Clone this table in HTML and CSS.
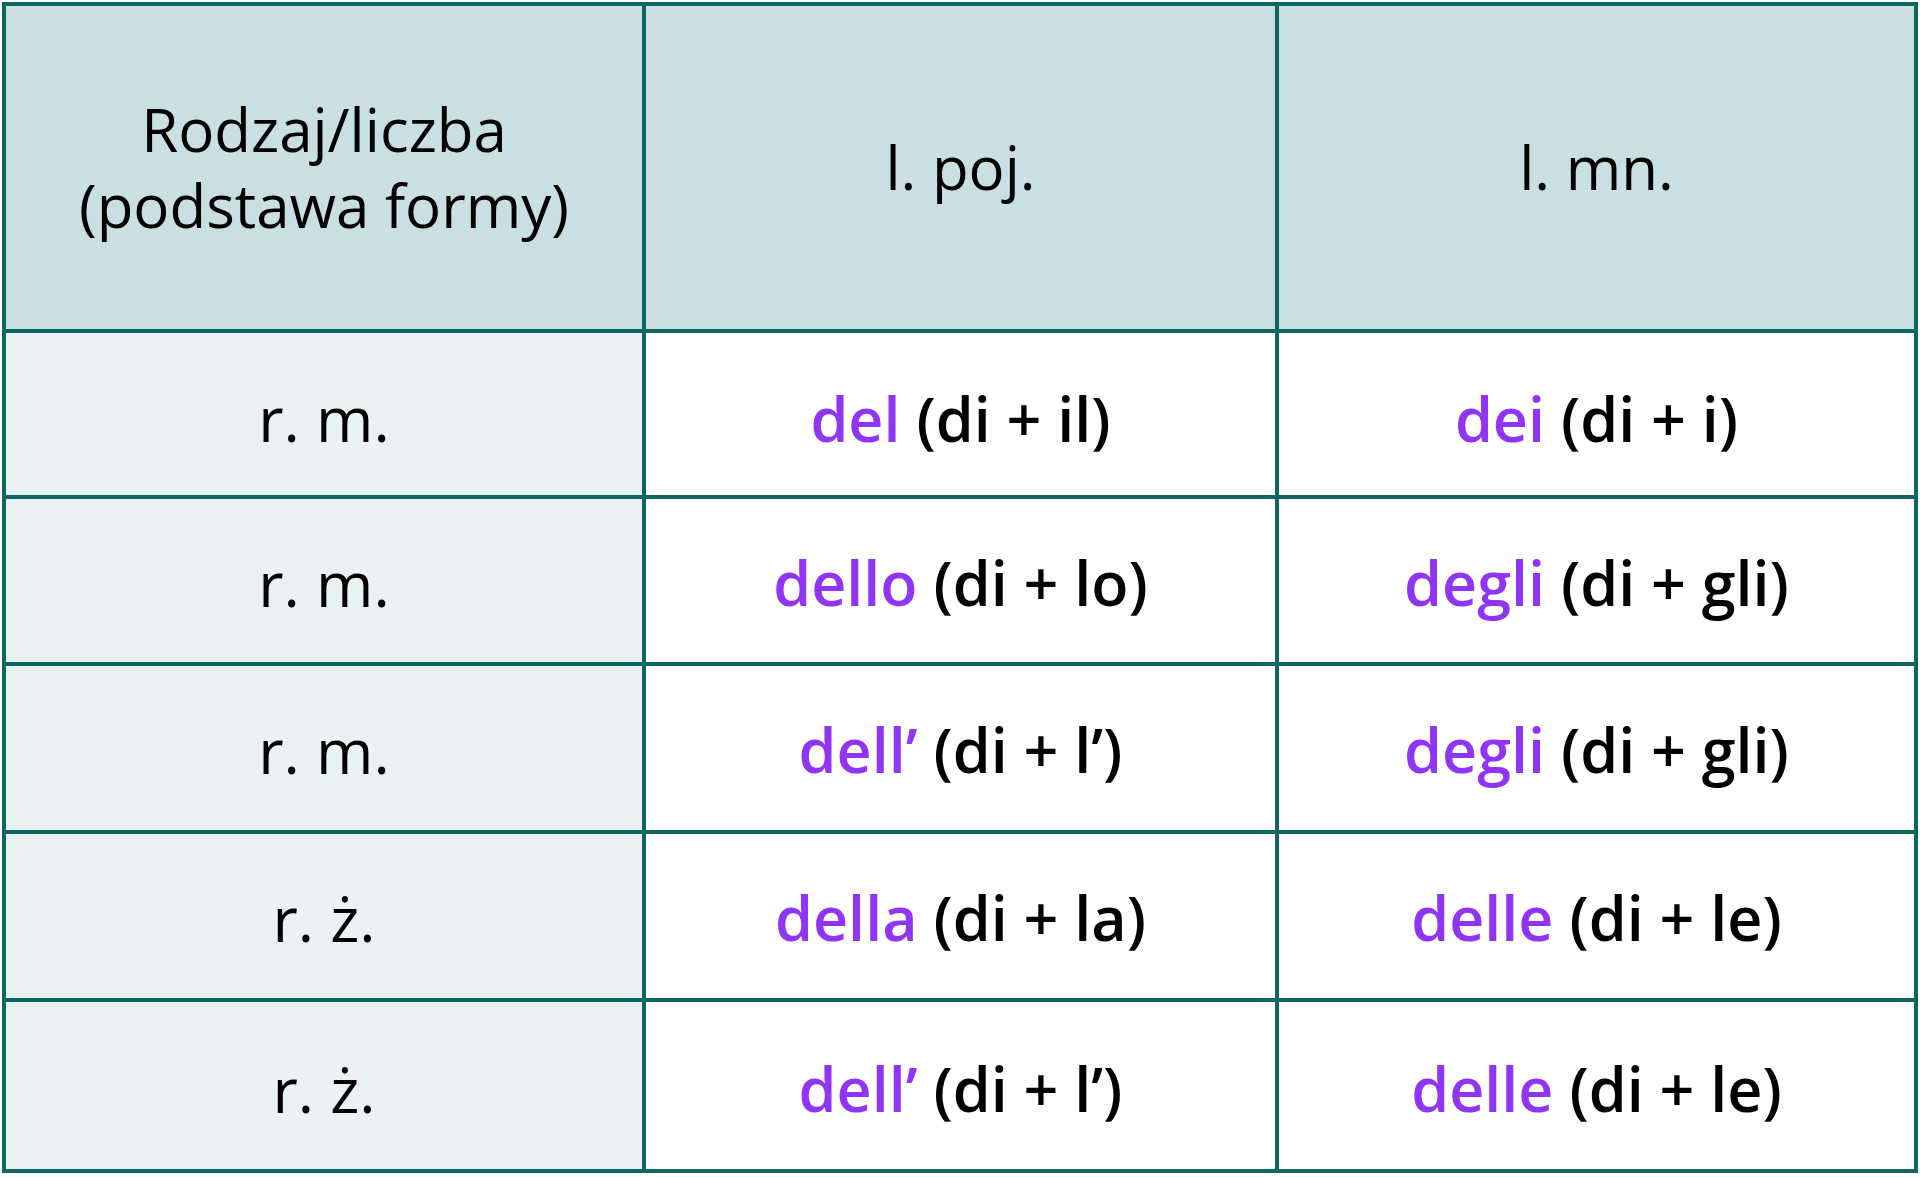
FILE: index.html
```html
<!DOCTYPE html>
<html lang="pl">
<head>
<meta charset="utf-8">
<title>Rodzajnik ściągnięty di</title>
<link rel="stylesheet" href="styles.css">
</head>
<body>
<div class="table">
  <div class="cell head"><span>Rodzaj/liczba<br>(podstawa formy)</span></div>
  <div class="cell head"><span>l. poj.</span></div>
  <div class="cell head"><span>l. mn.</span></div>

  <div class="cell label row-1"><span>r. m.</span></div>
  <div class="cell form row-1"><span><span class="art">del</span> (di + il)</span></div>
  <div class="cell form row-1"><span><span class="art">dei</span> (di + i)</span></div>

  <div class="cell label row-2"><span>r. m.</span></div>
  <div class="cell form row-2"><span><span class="art">dello</span> (di + lo)</span></div>
  <div class="cell form row-2"><span><span class="art">degli</span> (di + gli)</span></div>

  <div class="cell label row-3"><span>r. m.</span></div>
  <div class="cell form row-3"><span><span class="art">dell’</span> (di + l’)</span></div>
  <div class="cell form row-3"><span><span class="art">degli</span> (di + gli)</span></div>

  <div class="cell label row-4"><span>r. ż.</span></div>
  <div class="cell form row-4"><span><span class="art">della</span> (di + la)</span></div>
  <div class="cell form row-4"><span><span class="art">delle</span> (di + le)</span></div>

  <div class="cell label row-5"><span>r. ż.</span></div>
  <div class="cell form row-5"><span><span class="art">dell’</span> (di + l’)</span></div>
  <div class="cell form row-5"><span><span class="art">delle</span> (di + le)</span></div>
</div>
</body>
</html>
```
FILE: styles.css
```css
html, body {
  margin: 0;
  padding: 0;
  background: #ffffff;
}

body {
  padding: 2px 0 0 2px;
  font-family: "Open Sans", "Noto Sans", sans-serif;
  color: #000000;
}

.table {
  display: grid;
  width: 1916px;
  height: 1171px;
  box-sizing: border-box;
  padding: 4px;
  gap: 4px;
  background: #0e6663;
  grid-template-columns: 636px 629px 635px;
  grid-template-rows: 323px 162px 163px 164px 164px 167px;
}

.cell {
  display: flex;
  align-items: center;
  justify-content: center;
  text-align: center;
  background: #ffffff;
}

.head {
  background: #c9dfe1;
  font-size: 60px;
  font-weight: 400;
  line-height: 76px;
  padding-bottom: 2px;
}

.label {
  background: #eaf3f4;
  font-size: 62px;
  font-weight: 400;
}

.form {
  font-size: 61px;
  font-weight: 600;
}

.row-1 { padding-top: 8px; }
.row-2 { padding-top: 4px; }
.row-3 { padding-top: 3px; }
.row-4 { padding-top: 3px; }
.row-5 { padding-top: 6px; }

.art {
  color: #9035f5;
}
```
